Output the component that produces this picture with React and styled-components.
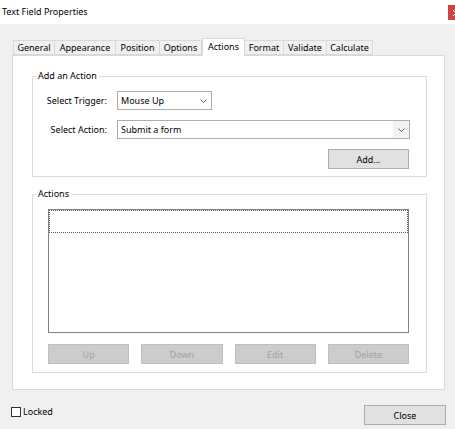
import React, { useState } from 'react';
import styled, { createGlobalStyle } from 'styled-components';

const GlobalStyle = createGlobalStyle`
  html, body {
    margin: 0;
    padding: 0;
    background: #f0f0f0;
  }
  * {
    box-sizing: border-box;
  }
`;

const Window = styled.div`
  width: 455px;
  height: 429px;
  overflow: hidden;
  display: flex;
  flex-direction: column;
  background: #f0f0f0;
  font-family: "Noto Sans", "Open Sans", sans-serif;
  font-size: 9px;
  color: #000;
`;

const TitleBar = styled.div`
  height: 24px;
  flex: none;
  display: flex;
  align-items: flex-start;
  justify-content: space-between;
  background: #fff;
  padding-left: 2px;
`;

const Title = styled.span`
  line-height: 24px;
`;

const CloseBox = styled.div`
  width: 16px;
  height: 15px;
  margin-top: 5px;
  margin-right: -9px;
  background: #cd4343;
  display: flex;
  align-items: center;
  justify-content: center;
`;

const Body = styled.div`
  flex: 1;
  display: flex;
  flex-direction: column;
  padding: 14px 10px 0 12px;
`;

const TabRow = styled.div`
  display: flex;
  align-items: flex-end;
  padding-left: 1px;
  height: 17px;
`;

const Tab = styled.div`
  width: ${(p) => p.$w}px;
  height: ${(p) => (p.$active ? 18 : 15)}px;
  margin-bottom: ${(p) => (p.$active ? -1 : 0)}px;
  margin-left: ${(p) => (p.$active ? 0 : -1)}px;
  position: ${(p) => (p.$active ? 'relative' : 'static')};
  z-index: ${(p) => (p.$active ? 1 : 'auto')};
  background: ${(p) => (p.$active ? '#fff' : '#f0f0f0')};
  border: 1px solid #d9d9d9;
  border-bottom: ${(p) => (p.$active ? 'none' : '1px solid #d9d9d9')};
  display: flex;
  align-items: center;
  justify-content: center;
  padding-bottom: ${(p) => (p.$active ? 2 : 0)}px;
  white-space: nowrap;
  cursor: default;

  &:first-child {
    margin-left: 0;
  }
`;

const Panel = styled.div`
  width: 433px;
  height: 335px;
  background: #fff;
  border: 1px solid #d9d9d9;
  padding: 20px 17px 16px 19px;
  display: flex;
  flex-direction: column;
  gap: 17px;
`;

const GroupBox = styled.div`
  position: relative;
  border: 1px solid #dcdcdc;
  padding: ${(p) => p.$pad};
  flex: ${(p) => (p.$grow ? 1 : 'none')};
`;

const GroupTitle = styled.span`
  position: absolute;
  top: -7px;
  left: 3px;
  padding: 0 2px;
  line-height: 12px;
  background: #fff;
`;

const FormGrid = styled.div`
  display: grid;
  grid-template-columns: 74px 1fr;
  column-gap: 10px;
  row-gap: 10px;
  align-items: center;
`;

const Label = styled.span`
  text-align: right;
  white-space: nowrap;
`;

const Select = styled.div`
  width: ${(p) => (p.$w ? `${p.$w}px` : '100%')};
  height: 19px;
  border: 1px solid #adadad;
  background: #fff;
  display: flex;
  align-items: stretch;
`;

const SelectValue = styled.span`
  flex: 1;
  padding-left: 3px;
  display: flex;
  align-items: center;
`;

const SelectArrow = styled.span`
  width: 16px;
  background: ${(p) => (p.$shade ? '#f2f2f2' : '#fff')};
  display: flex;
  align-items: center;
  justify-content: center;
`;

const Button = styled.button`
  height: 20px;
  width: ${(p) => (p.$w ? `${p.$w}px` : '100%')};
  padding: 0;
  font-family: inherit;
  font-size: 9px;
  background: ${(p) => (p.disabled ? '#cccccc' : '#e1e1e1')};
  border: 1px solid ${(p) => (p.disabled ? '#bfbfbf' : '#adadad')};
  color: ${(p) => (p.disabled ? '#a2a2a2' : '#000')};
  cursor: default;
`;

const AddCell = styled.div`
  grid-column: 2;
  display: flex;
  justify-content: flex-end;
  padding-right: 1px;
`;

const ListBox = styled.div`
  height: 124px;
  border: 1px solid #828282;
  background: #fff;
  padding: 0;
`;

const FocusRow = styled.div`
  height: 23px;
  border: 1px dotted #5a5a5a;
`;

const ButtonRow = styled.div`
  display: grid;
  grid-template-columns: repeat(4, 1fr);
  column-gap: 12px;
  margin-top: 11px;
`;

const Footer = styled.div`
  display: flex;
  justify-content: space-between;
  align-items: flex-start;
  padding-top: 15px;
  margin: 0 -1px 0 -1px;
`;

const CheckLabel = styled.label`
  display: flex;
  align-items: center;
  gap: 2px;
  margin-top: 1px;
  line-height: 12px;
  cursor: default;
`;

const CheckBox = styled.span`
  width: 10px;
  height: 10px;
  border: 1px solid #333;
  background: #fff;
  display: inline-block;
`;

const Chevron = () => (
  <svg width="7" height="4" viewBox="0 0 7 4">
    <path d="M0.5 0.5 L3.5 3.5 L6.5 0.5" fill="none" stroke="#606060" strokeWidth="1" />
  </svg>
);

const tabs = [
  ['General', 42],
  ['Appearance', 62],
  ['Position', 45],
  ['Options', 43],
  ['Actions', 43],
  ['Format', 40],
  ['Validate', 44],
  ['Calculate', 47],
];

export default function App() {
  const [active] = useState('Actions');

  return (
    <Window>
      <GlobalStyle />
      <TitleBar>
        <Title>Text Field Properties</Title>
        <CloseBox>
          <svg width="8" height="8" viewBox="0 0 8 8">
            <path d="M1 1 L7 7 M7 1 L1 7" stroke="#fff" strokeWidth="1" />
          </svg>
        </CloseBox>
      </TitleBar>
      <Body>
        <TabRow>
          {tabs.map(([name, w]) => (
            <Tab key={name} $w={w} $active={name === active}>
              {name}
            </Tab>
          ))}
        </TabRow>
        <Panel>
          <GroupBox $pad="14px 16px 7px 0">
            <GroupTitle>Add an Action</GroupTitle>
            <FormGrid>
              <Label>Select Trigger:</Label>
              <Select $w={95}>
                <SelectValue>Mouse Up</SelectValue>
                <SelectArrow>
                  <Chevron />
                </SelectArrow>
              </Select>
              <Label>Select Action:</Label>
              <Select>
                <SelectValue>Submit a form</SelectValue>
                <SelectArrow $shade>
                  <Chevron />
                </SelectArrow>
              </Select>
              <AddCell>
                <Button $w={81}>Add...</Button>
              </AddCell>
            </FormGrid>
          </GroupBox>
          <GroupBox $grow $pad="14px 17px 7px 15px">
            <GroupTitle>Actions</GroupTitle>
            <ListBox>
              <FocusRow />
            </ListBox>
            <ButtonRow>
              <Button disabled>Up</Button>
              <Button disabled>Down</Button>
              <Button disabled>Edit</Button>
              <Button disabled>Delete</Button>
            </ButtonRow>
          </GroupBox>
        </Panel>
        <Footer>
          <CheckLabel>
            <CheckBox />
            Locked
          </CheckLabel>
          <Button $w={82}>Close</Button>
        </Footer>
      </Body>
    </Window>
  );
}
